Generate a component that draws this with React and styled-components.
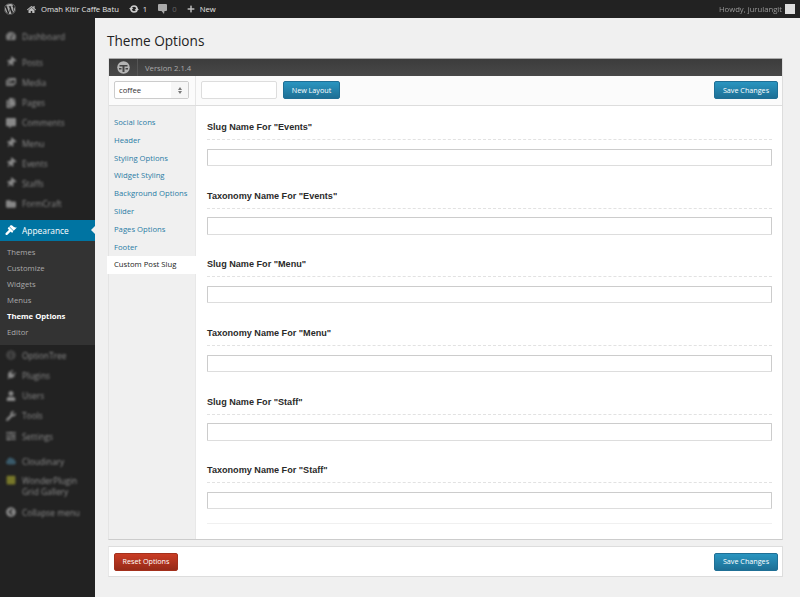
import React from "react";
import styled, { createGlobalStyle } from "styled-components";
import { FaWordpress, FaHome, FaPlus, FaThumbtack, FaTachometerAlt, FaPlug, FaUser, FaWrench, FaSlidersH, FaFolder, FaInfoCircle, FaCloud, FaImages, FaCopy, FaCommentAlt, FaChevronCircleLeft, FaSquare } from "react-icons/fa";

const GlobalStyle = createGlobalStyle`
    html, body {
        margin: 0;
        padding: 0;
        background: #f0f0f0;
        font-family: "Open Sans", sans-serif;
    }
    * { box-sizing: border-box; }
`;

const Page = styled.div`
    width: 800px;
    height: 597px;
    overflow: hidden;
    display: flex;
    flex-direction: column;
    background: #f0f0f0;
`;

const AdminBar = styled.div`
    height: 18px;
    flex: none;
    background: #222;
    color: #eee;
    display: flex;
    align-items: center;
    padding: 0 5px 0 4px;
    font-size: 7.7px;
`;

const BarItem = styled.div`
    display: flex;
    align-items: center;
    gap: ${(p) => p.$gap || 3}px;
    margin-right: ${(p) => p.$right || 0}px;
    color: ${(p) => p.$color || "#e4e4e4"};
`;

const Howdy = styled.div`
    margin-left: auto;
    display: flex;
    align-items: center;
    gap: 3px;
    color: #999;
    font-size: 7.7px;
    filter: blur(0.7px);
`;

const Avatar = styled.div`
    width: 10px;
    height: 10px;
    background: #ddd;
`;

const Body = styled.div`
    flex: 1;
    display: flex;
    min-height: 0;
`;

const Sidebar = styled.nav`
    width: 95px;
    flex: none;
    background: #222;
    padding-top: 8px;
`;

const MenuGroup = styled.div`
    margin-bottom: ${(p) => p.$gap || 0}px;
`;

const BlurItem = styled.div`
    display: flex;
    align-items: ${(p) => (p.$tall ? "flex-start" : "center")};
    gap: 6px;
    height: ${(p) => p.$height || 20.2}px;
    padding: ${(p) => (p.$tall ? "4px" : "0")} 0 0 6px;
    color: #8d8d8d;
    font-size: 8.4px;
    line-height: 11px;
    filter: blur(1px);
`;

const BlurIcon = styled.span`
    width: 10px;
    flex: none;
    display: flex;
    justify-content: center;
    font-size: 10px;
    color: ${(p) => p.$color || "#888"};
    transform: ${(p) => (p.$tilt ? "rotate(40deg)" : "none")};
`;

const ActiveItem = styled.div`
    position: relative;
    height: 20.5px;
    background: #0074a2;
    color: #fff;
    display: flex;
    align-items: center;
    gap: 5px;
    padding-left: 5px;
    font-size: 8.4px;
    &::after {
        content: "";
        position: absolute;
        right: 0;
        top: 6px;
        border: 4px solid transparent;
        border-right-color: #f0f0f0;
        border-left-width: 0;
    }
`;

const SubMenu = styled.div`
    background: #333;
    padding: 3.5px 0 5px 7px;
    height: 104.5px;
`;

const SubItem = styled.div`
    height: 16px;
    line-height: 16px;
    font-size: 7.7px;
    color: ${(p) => (p.$current ? "#fff" : "#aaa")};
    font-weight: ${(p) => (p.$current ? 700 : 400)};
`;

const Content = styled.main`
    flex: 1;
    padding: 0 17px 0 12px;
    min-width: 0;
`;

const Heading = styled.h1`
    margin: 0;
    height: 40px;
    padding-top: 13px;
    font-size: 13.6px;
    line-height: 20px;
    font-weight: 400;
    color: #222;
`;

const Panel = styled.div`
    margin-left: 1px;
    background: #fff;
    border-bottom: 1px solid #ccc;
    border-right: 1px solid #ddd;
    border-left: 1px solid #e4e4e4;
`;

const PanelHead = styled.div`
    height: 18px;
    background: linear-gradient(#3c3c3c, #484848);
    border-top: 1px solid #aaa;
    display: flex;
    align-items: center;
    color: #aaa;
    font-size: 7.7px;
`;

const LogoCell = styled.div`
    width: 29px;
    height: 100%;
    display: flex;
    align-items: center;
    justify-content: center;
    border-right: 1px solid #555;
    margin-right: 7px;
`;

const Toolbar = styled.div`
    height: 30px;
    display: flex;
    background: #fbfbfb;
    border-bottom: 1px solid #ddd;
`;

const ToolLeft = styled.div`
    width: 87px;
    flex: none;
    border-right: 1px solid #e6e6e6;
    display: flex;
    align-items: center;
    padding: 0 0 1px 5px;
`;

const ToolRight = styled.div`
    flex: 1;
    display: flex;
    align-items: center;
    padding: 0 4px 1px 5px;
    gap: 6px;
`;

const FakeSelect = styled.div`
    width: 75px;
    height: 18px;
    background: #fff;
    border: 1px solid #ccc;
    border-radius: 2px;
    display: flex;
    align-items: center;
    justify-content: space-between;
    padding-left: 4px;
    font-size: 7.7px;
    color: #333;
`;

const SelectArrow = styled.span`
    width: 17px;
    height: 100%;
    background: #f6f6f6;
    display: flex;
    flex-direction: column;
    align-items: center;
    justify-content: center;
    gap: 1px;
    &::before, &::after {
        content: "";
        border: 2.5px solid transparent;
    }
    &::before {
        border-bottom: 3px solid #777;
        border-top-width: 0;
    }
    &::after {
        border-top: 3px solid #777;
        border-bottom-width: 0;
    }
`;

const LayoutInput = styled.input`
    width: 76px;
    height: 18px;
    border: 1px solid #ddd;
    border-radius: 2px;
    background: #fff;
    padding: 0;
`;

const Button = styled.button`
    height: 18px;
    padding: 0;
    width: ${(p) => p.$width}px;
    margin-left: ${(p) => (p.$push ? "auto" : "0")};
    border: 1px solid ${(p) => (p.$danger ? "#a3301c" : "#1f6f95")};
    border-radius: 2px;
    background: ${(p) => (p.$danger ? "linear-gradient(#c93c24, #962a18)" : "linear-gradient(#2a95c0, #1d6f95)")};
    color: #fff;
    font-family: "Open Sans", sans-serif;
    font-size: 7.2px;
    line-height: 15px;
    text-align: center;
`;

const Columns = styled.div`
    display: flex;
    height: 433px;
`;

const OptionNav = styled.div`
    width: 87px;
    flex: none;
    background: #f0f0f0;
    border-right: 1px solid #e8e8e8;
    padding-top: 8px;
`;

const NavLink = styled.div`
    height: 17.8px;
    line-height: 17.5px;
    font-size: 7.7px;
    color: ${(p) => (p.$active ? "#222" : "#2a7ca5")};
    background: ${(p) => (p.$active ? "#fff" : "transparent")};
    margin: 0 ${(p) => (p.$active ? "-1px" : "0")} 0 ${(p) => (p.$active ? "-2px" : "0")};
    padding-left: ${(p) => (p.$active ? "7px" : "5px")};
`;

const Fields = styled.div`
    flex: 1;
    padding: 11px 10px 0 11px;
`;

const Field = styled.div`
    height: 68.7px;
`;

const FieldLabel = styled.div`
    height: 23px;
    padding-top: 4px;
    font-family: "Liberation Sans", Arial, sans-serif;
    font-size: 9.1px;
    font-weight: 700;
    line-height: 12px;
    color: #2a2a2a;
    border-bottom: 1px dashed #e2e2e2;
`;

const FieldInput = styled.input`
    display: block;
    width: 100%;
    height: 17.5px;
    margin-top: 8.5px;
    padding: 0;
    background: #fff;
    border: 1px solid #ccc;
    border-bottom-color: #ddd;
    border-radius: 1px;
`;

const EndRule = styled.div`
    margin-top: -6px;
    border-top: 1px solid #f0f0f0;
`;

const FootBar = styled.div`
    margin: 6px 0 0 1px;
    height: 31px;
    background: #fff;
    border-top: 1px solid #ddd;
    border-bottom: 1px solid #ddd;
    border-left: 1px solid #e8e8e8;
    border-right: 1px solid #ddd;
    display: flex;
    align-items: center;
    padding: 0 4px 0 5px;
`;

const RefreshIcon = () => (
    <svg width="10" height="10" viewBox="0 0 20 20">
        <circle cx="10" cy="10" r="6" fill="none" stroke="#ccc" strokeWidth="3.4" />
        <path d="M0 8l4.4 4.5L8.8 8zM11.2 12l4.4-4.5L20 12z" fill="#ccc" />
    </svg>
);

const CommentIcon = () => (
    <svg width="9" height="10" viewBox="0 0 18 20">
        <path d="M2 0h14a2 2 0 0 1 2 2v10a2 2 0 0 1-2 2h-3l-1 6-5-6H2a2 2 0 0 1-2-2V2a2 2 0 0 1 2-2z" fill="#aaa" />
    </svg>
);

const BrushIcon = () => (
    <svg width="12" height="12" viewBox="0 0 20 20">
        <path d="M14.48 11.06L7.41 3.99l1.5-1.5c.5-.56 2.3-.47 3.51.32 1.21.8 1.43 1.28 2.91 2.1 1.18.64 2.45 1.26 4.45.85z" fill="#fff" />
        <path d="M13.77 11.77L6.7 4.7 4.93 6.47c-.39.39-.39 1.02 0 1.41l1.06 1.06c.39.39.39 1.03 0 1.42L1.3 15c-.8.8-.8 2 0 2.8s2 .8 2.8 0l4.6-4.6c.39-.39 1.03-.39 1.42 0l1.06 1.06c.39.39 1.02.39 1.41 0z" fill="#fff" />
    </svg>
);

const ThemeLogo = () => (
    <svg width="13" height="13" viewBox="0 0 26 26">
        <circle cx="13" cy="13" r="12.5" fill="#b4b4b4" />
        <path d="M5 8h16v3h-6v11h-4V11H5z" fill="#444" />
        <path d="M4 14h5v3H4zM17 14h5v3h-5z" fill="#444" />
    </svg>
);

const topItems = [
    ["Dashboard", FaTachometerAlt],
];
const contentItems = [
    ["Posts", FaThumbtack, null, true],
    ["Media", FaImages],
    ["Pages", FaCopy],
    ["Comments", FaCommentAlt],
    ["Menu", FaThumbtack, null, true],
    ["Events", FaThumbtack, null, true],
    ["Staffs", FaThumbtack, null, true],
    ["FormCraft", FaFolder],
];
const subItems = ["Themes", "Customize", "Widgets", "Menus", "Theme Options", "Editor"];
const adminItems = [
    ["OptionTree", FaInfoCircle, "#444"],
    ["Plugins", FaPlug, null, true],
    ["Users", FaUser],
    ["Tools", FaWrench],
    ["Settings", FaSlidersH],
];
const navItems = ["Social Icons", "Header", "Styling Options", "Widget Styling", "Background Options", "Slider", "Pages Options", "Footer", "Custom Post Slug"];
const fields = [
    'Slug Name For "Events"',
    'Taxonomy Name For "Events"',
    'Slug Name For "Menu"',
    'Taxonomy Name For "Menu"',
    'Slug Name For "Staff"',
    'Taxonomy Name For "Staff"',
];

const MenuRow = ({ label, icon: Icon, color, tilt }) => (
    <BlurItem>
        <BlurIcon $color={color} $tilt={tilt}><Icon /></BlurIcon>
        {label}
    </BlurItem>
);

const App = () => {
    return (
        <Page>
            <GlobalStyle />
            <AdminBar>
                <BarItem $right={11}><FaWordpress size={12} color="#aaa" /></BarItem>
                <BarItem $right={10} $gap={5}><FaHome size={9} color="#bbb" />Omah Kitir Caffe Batu</BarItem>
                <BarItem $right={11} $gap={4}><RefreshIcon />1</BarItem>
                <BarItem $right={10} $gap={5} $color="#666"><CommentIcon />0</BarItem>
                <BarItem $gap={5}><FaPlus size={8} color="#bbb" />New</BarItem>
                <Howdy>Howdy, jurulangit<Avatar /></Howdy>
            </AdminBar>
            <Body>
                <Sidebar>
                    <MenuGroup $gap={6}>
                        {topItems.map(([label, icon]) => <MenuRow key={label} label={label} icon={icon} />)}
                    </MenuGroup>
                    <MenuGroup $gap={6.5}>
                        {contentItems.map(([label, icon, color, tilt]) => <MenuRow key={label} label={label} icon={icon} color={color} tilt={tilt} />)}
                    </MenuGroup>
                    <ActiveItem><BrushIcon />Appearance</ActiveItem>
                    <SubMenu>
                        {subItems.map((item) => (
                            <SubItem key={item} $current={item === "Theme Options"}>{item}</SubItem>
                        ))}
                    </SubMenu>
                    <MenuGroup $gap={5}>
                        {adminItems.map(([label, icon, color, tilt]) => <MenuRow key={label} label={label} icon={icon} color={color} tilt={tilt} />)}
                    </MenuGroup>
                    <MenuRow label="Cloudinary" icon={FaCloud} color="#3a5a6a" />
                    <BlurItem $tall $height={32}>
                        <BlurIcon $color="#77772a"><FaSquare /></BlurIcon>
                        <span>WonderPlugin<br />Grid Gallery</span>
                    </BlurItem>
                    <BlurItem $height={18}>
                        <BlurIcon><FaChevronCircleLeft /></BlurIcon>
                        Collapse menu
                    </BlurItem>
                </Sidebar>
                <Content>
                    <Heading>Theme Options</Heading>
                    <Panel>
                        <PanelHead>
                            <LogoCell><ThemeLogo /></LogoCell>
                            Version 2.1.4
                        </PanelHead>
                        <Toolbar>
                            <ToolLeft>
                                <FakeSelect>coffee<SelectArrow /></FakeSelect>
                            </ToolLeft>
                            <ToolRight>
                                <LayoutInput />
                                <Button $width={57}>New Layout</Button>
                                <Button $width={64} $push>Save Changes</Button>
                            </ToolRight>
                        </Toolbar>
                        <Columns>
                            <OptionNav>
                                {navItems.map((item) => (
                                    <NavLink key={item} $active={item === "Custom Post Slug"}>{item}</NavLink>
                                ))}
                            </OptionNav>
                            <Fields>
                                {fields.map((label) => (
                                    <Field key={label}>
                                        <FieldLabel>{label}</FieldLabel>
                                        <FieldInput />
                                    </Field>
                                ))}
                                <EndRule />
                            </Fields>
                        </Columns>
                    </Panel>
                    <FootBar>
                        <Button $danger $width={64}>Reset Options</Button>
                        <Button $width={64} $push>Save Changes</Button>
                    </FootBar>
                </Content>
            </Body>
        </Page>
    );
};

export default App;
